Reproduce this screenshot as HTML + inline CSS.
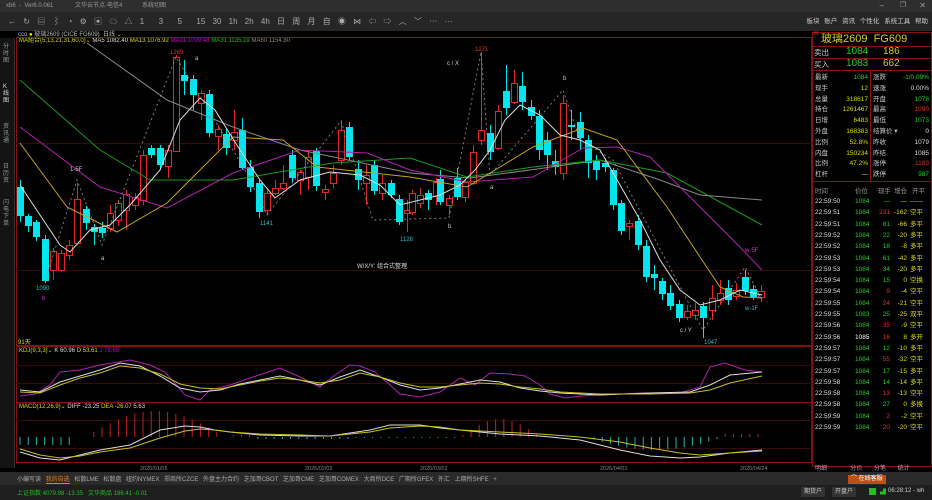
<!DOCTYPE html>
<html><head><meta charset="utf-8">
<style>
*{margin:0;padding:0;box-sizing:border-box}
body{width:932px;height:500px;background:#000;overflow:hidden;font-family:"Liberation Sans","Noto Sans CJK SC",sans-serif;color:#ccc;position:relative;font-size:8px}
.abs{position:absolute}
#title{left:0;top:0;width:932px;height:12px;background:#2e2e2e;color:#999;font-size:6px;line-height:12px}
#tool{left:0;top:12px;width:932px;height:19px;background:#262626;color:#aaa;font-size:8px;line-height:19px}
#menu{right:4px;top:12px;font-size:6.5px;color:#ccc;line-height:19px;word-spacing:3px}
.row{position:absolute;left:812px;width:120px;height:11px;font-size:6.5px;line-height:11px}
.row span{position:absolute}
</style></head><body>
<div id="title" class="abs"><span style="position:absolute;left:6px">xb6 &nbsp;- &nbsp;Ver6.0.061</span><span style="position:absolute;left:75px">文华云节点-电信4</span><span style="position:absolute;left:142px">系统切图</span>
<span style="position:absolute;right:48px;font-size:8px">–</span><span style="position:absolute;right:26px;font-size:7px">❐</span><span style="position:absolute;right:6px;font-size:8px">✕</span></div>
<div id="tool" class="abs"><span style="position:absolute;left:8px;letter-spacing:0;word-spacing:5px">← ↻ ▤ ⌇ ◔ ⚙ ▣ ☁ △ 1 &nbsp;3 &nbsp;5 &nbsp;15 30 1h 2h 4h 日 周 月 自 ◉ ⋈ ⇦ ⇨ ︿ ﹀ ⋯ ···</span></div>
<div id="menu" class="abs">板块 账户 资讯 个性化 系统工具 帮助</div>
<div class="abs" style="left:18px;top:31px;font-size:6px;color:#bbb;line-height:8px">cco <span style="color:#ff0">●</span> 玻璃2609 (CICE FG609) &nbsp;日线 ⌄</div>
<div class="abs" style="left:19px;top:38px;font-size:6px;line-height:7px;white-space:nowrap"><span style="color:#dd0">MA組合(5,13,21,31,60,0)⌄</span> <span style="color:#ddd">MA5 1082.40</span> <span style="color:#dd0">MA13 1076.92</span> <span style="color:#c0c">MA21 1099.48</span> <span style="color:#0c0">MA31 1135.19</span> <span style="color:#888">MA60 1154.80</span></div>

<div class="abs" style="left:0;top:38px;width:15px;height:430px;background:#141414;border-right:1px solid #333"></div>
<div class="abs" style="left:3px;top:44px;width:8px;font-size:6px;color:#999;line-height:7px">分<br>时<br>图</div>
<div class="abs" style="left:3px;top:84px;width:8px;font-size:6px;color:#ddd;line-height:7px">K<br>线<br>图</div>
<div class="abs" style="left:3px;top:124px;width:8px;font-size:6px;color:#999;line-height:7px">资<br>讯<br>通</div>
<div class="abs" style="left:3px;top:164px;width:8px;font-size:6px;color:#999;line-height:7px">日<br>历<br>资</div>
<div class="abs" style="left:3px;top:200px;width:8px;font-size:6px;color:#999;line-height:7px">闪<br>电<br>下<br>单</div>

<svg class="abs" style="left:0;top:0" width="932" height="500" id="chart">
<rect x="16.5" y="37.5" width="795" height="308" fill="none" stroke="#8a1010"/>
<line x1="16" y1="143.5" x2="812" y2="143.5" stroke="#3a0808"/>
<line x1="16" y1="270.5" x2="812" y2="270.5" stroke="#3a0808"/>
<rect x="16.5" y="346.5" width="795" height="56" fill="none" stroke="#8a1010"/>
<rect x="16.5" y="402.5" width="795" height="60" fill="none" stroke="#8a1010"/>
<g stroke="#3a0808"><line x1="16" y1="365.5" x2="812" y2="365.5"/><line x1="16" y1="383.5" x2="812" y2="383.5"/><line x1="16" y1="420.5" x2="812" y2="420.5"/><line x1="16" y1="448.5" x2="812" y2="448.5"/></g>
<g id="cand"></g>
<g fill="none" stroke-width="1">
<polyline stroke="#888" points="87,43 167,100 233,127 300,150 410,173 470,178 530,170 600,160 660,180 700,195 762,200"/>
<polyline stroke="#1a9a1a" points="20,80 100,150 150,180 233,180 333,163 410,158 467,177 533,167 600,160 667,173 762,225"/>
<polyline stroke="#b020b0" points="20,127 100,187 167,208 233,173 300,150 367,153 410,170 467,182 533,177 583,148 617,147 650,157 700,207 733,240 762,270"/>
<polyline stroke="#c8a020" points="20,143 67,207 117,232 167,203 233,137 283,140 317,167 410,177 467,187 533,147 583,128 617,140 667,207 700,257 720,287 743,297 762,298"/>
<polyline stroke="#ddd" points="20,185 40,215 60,245 70,252 90,230 110,225 130,205 160,170 180,120 200,98 215,110 240,150 260,180 275,198 300,180 330,172 360,175 380,185 400,205 420,200 440,195 460,185 475,170 490,150 505,120 520,105 540,115 560,135 580,140 600,150 620,185 640,220 660,260 680,290 700,305 720,300 740,290 762,295"/>
</g>
<g fill="none" stroke="#999" stroke-dasharray="2,3" opacity="0.8">
<polyline points="45,281 77,180 102,245 176,57 245,170 267,215 341,121 373,220 449,218 481,52 490,175 563,90 580,140 613,160 703,330 745,267 762,300"/>
</g>
<g font-size="6" font-family="Liberation Sans">
<text x="170" y="54" fill="#e03030">1269</text><text x="195" y="60" fill="#ccc">a</text>
<text x="70" y="171" fill="#ccc">1-5F</text><text x="101" y="260" fill="#ccc">a</text>
<text x="36" y="290" fill="#30c0c0">1090</text><text x="42" y="300" fill="#c040c0">b</text>
<text x="260" y="225" fill="#30c0c0">1141</text>
<text x="400" y="241" fill="#30c0c0">1128</text><text x="448" y="228" fill="#ccc">b</text>
<text x="475" y="51" fill="#e03030">1271</text><text x="447" y="65" fill="#ccc">c / X</text>
<text x="563" y="80" fill="#ccc">b</text><text x="490" y="189" fill="#ccc">a</text>
<text x="357" y="268" fill="#ddd" font-family="Liberation Sans,Noto Sans CJK SC">W/X/Y: 组合式整理</text>
<text x="745" y="252" fill="#c040c0">w-5F</text><text x="745" y="310" fill="#30c0c0">w-1F</text>
<text x="680" y="332" fill="#ccc">c / Y</text><text x="704" y="344" fill="#30c0c0">1047</text>
<text x="18" y="344" fill="#dd0">91天</text>
<text x="19" y="352" fill="#dd0">KDJ(9,3,3)⌄ <tspan fill="#ddd">K 60.96</tspan> <tspan fill="#dd0">D 53.61</tspan> <tspan fill="#c0c">J 75.65</tspan></text>
<text x="19" y="408" fill="#dd0">MACD(12,26,9)⌄ <tspan fill="#ddd">DIFF -23.25</tspan> <tspan fill="#dd0">DEA -26.07</tspan> <tspan fill="#ddd">5.63</tspan></text>
<g fill="#888" font-size="5.5"><text x="140" y="470">2026/01/05</text><text x="305" y="470">2026/02/02</text><text x="420" y="470">2026/03/02</text><text x="600" y="470">2026/04/01</text><text x="740" y="470">2026/04/24</text></g>
</g>
<g id="macd"></g>
<g fill="none">
<polyline stroke="#b020b0" points="20,396 35,394 50,385 60,372 80,370 100,365 130,360 150,365 165,372 185,395 200,400 210,390 230,385 250,378 280,368 300,377 320,387 335,375 350,365 360,366 375,372 390,385 400,394 420,397 440,392 460,378 475,385 490,373 510,374 525,376 540,385 550,394 565,398 580,396 600,395 640,393 680,393 700,387 710,367 725,363 745,370 762,372"/>
<polyline stroke="#ddd" points="20,390 40,392 60,382 80,376 100,370 120,363 140,366 160,376 180,388 200,392 220,390 240,384 260,380 280,376 300,380 320,385 340,377 360,370 380,377 400,385 420,390 440,388 460,384 480,380 500,382 520,388 540,391 560,393 600,395 650,393 690,392 710,385 730,375 762,372"/>
<polyline stroke="#c8c020" points="20,392 40,393 60,385 80,378 100,373 120,366 140,368 160,374 180,384 200,388 220,389 240,385 260,381 280,378 300,380 320,383 340,380 360,373 380,377 400,383 420,387 440,387 460,385 480,383 500,384 520,387 540,389 560,392 600,394 650,394 690,393 710,390 730,383 762,376"/>
<polyline stroke="#ddd" points="20,452 40,458 60,460 80,455 100,450 130,445 160,430 185,426 200,427 215,430 230,432 260,435 300,436 330,436 350,433 370,430 390,425 420,425 440,428 460,430 500,434 540,436 580,440 620,450 650,456 680,458 700,457 730,453 762,450"/>
<polyline stroke="#c8c020" points="20,449 40,455 60,458 80,456 100,452 130,448 160,438 185,431 200,429 215,430 230,432 260,434 300,435 330,436 350,434 370,432 390,428 420,426 440,427 460,430 500,432 540,434 580,437 620,442 650,448 680,453 700,455 730,453 762,451"/>
</g>

<rect x="812.5" y="32.5" width="119" height="434" fill="none" stroke="#8a1010"/>
<g stroke="#8a1010"><line x1="812" y1="46.5" x2="932" y2="46.5"/><line x1="812" y1="58.5" x2="932" y2="58.5"/><line x1="812" y1="70.5" x2="932" y2="70.5"/><line x1="812" y1="181.5" x2="932" y2="181.5"/><line x1="870.5" y1="71" x2="870.5" y2="181"/></g>
</svg>

<div class="abs" style="left:814px;top:31px;font-size:5px;color:#e03030">M</div>
<div class="abs" style="left:821px;top:32px;font-size:11px;color:#d8d020;line-height:14px">玻璃2609 &nbsp;FG609</div>
<div class="abs" style="left:814px;top:47px;font-size:7.5px;line-height:11px;color:#ccc">卖出</div><div class="abs" style="left:846px;top:46px;font-size:10px;color:#20d020;line-height:12px">1084</div><div class="abs" style="left:883px;top:46px;font-size:10px;color:#d8d020;line-height:12px">186</div>
<div class="abs" style="left:814px;top:59px;font-size:7.5px;line-height:11px;color:#ccc">买入</div><div class="abs" style="left:846px;top:58px;font-size:10px;color:#20d020;line-height:12px">1083</div><div class="abs" style="left:883px;top:58px;font-size:10px;color:#d8d020;line-height:12px">662</div>
<div id="quote"></div>
<div class="abs" style="left:815px;top:185px;font-size:6.5px;color:#999;width:117px">时间<span style="position:absolute;left:40px">价位</span><span style="position:absolute;left:63px">现手</span><span style="position:absolute;left:79px">增仓</span><span style="position:absolute;left:97px">开平</span></div>
<div id="ticks"></div>
<div class="abs" style="left:815px;top:463px;font-size:6px;color:#aaa;word-spacing:10px">明细 &nbsp;分价 分笔 统计</div>

<div class="abs" style="left:0;top:472px;width:932px;height:13px;background:#2a2a2a"></div>
<div class="abs" style="left:17px;top:474px;font-size:6px;color:#aaa;white-space:nowrap;word-spacing:3px">小编写读 <span style="color:#e08020;border-bottom:1px solid #e08020">我的自选</span> 松散LME 松散盘 纽约NYMEX 郑商所CZCE 外盘主力合约 芝加哥CBOT 芝加哥CME 芝加哥COMEX 大商所DCE 广期所GFEX 外汇 上期所SHFE +</div>
<div class="abs" style="left:0;top:485px;width:932px;height:15px;background:#1e1e1e"></div>
<div class="abs" style="left:17px;top:488px;font-size:6px;color:#20c020;white-space:nowrap">上证指数 4079.98 -13.35 &nbsp; 文华商品 186.41 -0.01</div>
<div class="abs" style="left:848px;top:475px;font-size:6px;color:#fff;background:#c05010;padding:0 3px;line-height:9px">⌒ 在线客服</div>
<div class="abs" style="left:801px;top:487px;font-size:6px;color:#ccc;background:#333;padding:0 3px;line-height:10px">期货户</div>
<div class="abs" style="left:832px;top:487px;font-size:6px;color:#ccc;background:#333;padding:0 3px;line-height:10px">开盘户</div>
<div class="abs" style="left:869px;top:488px;width:7px;height:7px;background:#20c020"></div>
<div class="abs" style="left:880px;top:487px;font-size:6px;color:#20c020">▟</div>
<div class="abs" style="left:888px;top:488px;font-size:6px;color:#ccc">06:28:12 - wh</div>

<script>
var C=[[20,187,216,180,222,0],[28,216,226,214,232,0],[36,222,237,220,241,0],[45,239,281,235,283,0],[53,270,251,248,280,1],[61,270,253,250,272,1],[69,255,245,240,260,1],[77,243,199,183,245,1],[86,209,223,206,230,0],[94,227,232,224,245,0],[102,228,233,222,238,0],[110,228,213,205,232,1],[118,220,203,200,226,1],[126,210,194,190,230,1],[135,205,197,193,210,1],[143,200,155,150,205,1],[151,148,155,145,158,0],[160,148,165,145,170,0],[168,166,150,145,178,1],[176,151,57,55,152,1],[184,75,81,60,95,0],[193,79,95,75,110,0],[201,103,93,90,120,1],[209,94,133,90,137,0],[218,136,129,125,150,1],[226,134,148,128,155,0],[234,140,132,110,150,1],[242,130,168,118,170,0],[250,167,187,160,192,0],[259,183,212,180,218,0],[267,210,193,188,215,1],[275,193,188,180,195,1],[283,188,183,165,190,1],[292,155,178,150,182,0],[300,180,172,170,195,1],[308,177,157,150,190,1],[316,151,186,148,191,0],[325,192,189,185,200,1],[333,183,173,165,188,1],[341,160,130,120,165,1],[349,127,157,122,160,0],[358,169,180,160,190,0],[366,183,175,165,205,1],[374,165,191,160,195,0],[382,193,183,175,200,1],[391,183,195,180,198,0],[399,199,222,195,225,0],[407,213,210,200,232,1],[412,212,193,190,215,1],[420,203,195,188,208,1],[428,193,200,190,210,0],[436,196,182,178,205,1],[440,179,202,170,205,0],[449,205,198,195,215,1],[457,178,197,168,200,0],[465,197,182,180,202,1],[473,183,152,145,185,1],[481,140,130,52,145,1],[490,133,152,125,160,0],[498,148,111,105,150,1],[506,91,108,65,115,0],[514,102,83,70,104,1],[522,86,102,72,110,0],[531,107,116,100,120,0],[539,116,150,110,160,0],[547,140,155,132,170,0],[555,161,167,150,175,0],[563,173,103,95,180,1],[571,125,127,110,140,0],[580,122,138,112,150,0],[588,140,163,135,178,0],[596,161,170,155,180,0],[605,163,167,158,172,0],[613,170,205,168,210,0],[621,203,231,200,235,0],[629,226,223,220,240,1],[638,221,245,215,250,0],[646,246,277,240,282,0],[654,274,278,265,290,0],[662,281,294,278,300,0],[670,293,306,285,310,0],[679,304,318,300,322,0],[687,317,311,305,320,1],[695,315,310,303,320,1],[703,306,318,302,338,0],[712,310,298,285,320,1],[720,300,293,280,305,1],[728,288,300,280,305,0],[736,296,290,283,300,1],[745,277,291,270,295,0],[753,289,297,285,300,0],[761,297,291,285,302,1]];
var s='';C.forEach(function(c){var x=c[0],t=Math.min(c[1],c[2]),b=Math.max(c[1],c[2]),col=c[5]?'#e02828':'#00e5ee';s+='<line x1="'+x+'.5" y1="'+c[3]+'" x2="'+x+'.5" y2="'+c[4]+'" stroke="'+col+'"/>';if(c[5])s+='<rect x="'+(x-2.5)+'" y="'+t+'.5" width="6" height="'+Math.max(1,b-t)+'" fill="#000" stroke="'+col+'"/>';else s+='<rect x="'+(x-3)+'" y="'+t+'" width="7" height="'+Math.max(1,b-t)+'" fill="'+col+'"/>';});
document.getElementById('cand').innerHTML=s;
function mv(x){
 if(x<75)return 8;
 if(x<90)return 0;
 if(x<225)return -Math.sin((x-85)/140*Math.PI)*26;
 if(x<250)return -2;
 if(x<455)return (x<350?2:1);
 if(x<540)return -Math.sin((x-460)/80*Math.PI)*18;
 if(x<585)return 0;
 if(x<725)return Math.sin((x-585)/140*Math.PI)*13;
 return -3;
}
var m='',base=437;for(var x=20;x<=765;x+=8.2){var v=mv(x);if(Math.abs(v)<0.6)continue;m+='<line x1="'+x.toFixed(1)+'" y1="'+base+'" x2="'+x.toFixed(1)+'" y2="'+(base+v).toFixed(1)+'" stroke="'+(v<0?'#c02020':'#20b0b0')+'"/>';}
document.getElementById('macd').innerHTML=m;
var Q=[['最新','1084','#20d020','涨跌','-1/0.09%','#20d020'],['现手','12','#dd0','速涨','0.00%','#ddd'],['总量','318617','#dd0','开盘','1078','#20d020'],['持仓','1261467','#dd0','最高','1090','#e03030'],['日增','6483','#dd0','最低','1073','#20d020'],['外盘','168383','#dd0','结算价 ▾','0','#ddd'],['比例','52.8%','#dd0','昨收','1079','#ddd'],['内盘','150234','#dd0','昨结','1085','#ddd'],['比例','47.2%','#dd0','涨停','1183','#e03030'],['杠杆','—','#ddd','跌停','987','#20d020']];
var q='';Q.forEach(function(r,i){var y=72+i*10.8;q+='<div class="row" style="top:'+y+'px"><span style="left:3px;color:#ccc">'+r[0]+'</span><span style="right:64px;color:'+r[2]+'">'+r[1]+'</span><span style="left:61px;color:#ccc">'+r[3]+'</span><span style="right:3px;color:'+r[5]+'">'+r[4]+'</span></div>';});
document.getElementById('quote').innerHTML=q;
var T=[['22:59:50','1084','—','—','——',0],['22:59:51','1084','231','-162','空平',1],['22:59:51','1084','81','-66','多平',0],['22:59:52','1084','22','-20','多平',0],['22:59:52','1084','18','-8','多平',0],['22:59:53','1084','61','-42','多平',0],['22:59:53','1084','34','-20','多平',0],['22:59:54','1084','15','0','空换',0],['22:59:54','1084','9','-4','空平',1],['22:59:55','1084','24','-21','空平',1],['22:59:55','1083','25','-25','双平',0],['22:59:56','1084','35','-9','空平',1],['22:59:56','1085','16','8','多开',1],['22:59:57','1084','12','-10','多平',0],['22:59:57','1084','55','-32','空平',1],['22:59:57','1084','17','-15','多平',0],['22:59:58','1084','14','-14','多平',0],['22:59:58','1084','13','-13','空平',1],['22:59:58','1084','27','0','多换',0],['22:59:59','1084','2','-2','空平',1],['22:59:59','1084','20','-20','空平',1]];
var t='';T.forEach(function(r,i){var y=196+i*11.3;t+='<div class="row" style="top:'+y+'px"><span style="left:3px;color:#ddd">'+r[0]+'</span><span style="left:43px;color:'+(r[1]=='1085'?'#fff':'#20d020')+'">'+r[1]+'</span><span style="right:42px;color:'+(r[5]?'#e03030':'#20d020')+'">'+r[2]+'</span><span style="right:25px;color:#dd0">'+r[3]+'</span><span style="left:98px;color:#dd0">'+r[4]+'</span></div>';});
document.getElementById('ticks').innerHTML=t;
</script>
</body></html>
